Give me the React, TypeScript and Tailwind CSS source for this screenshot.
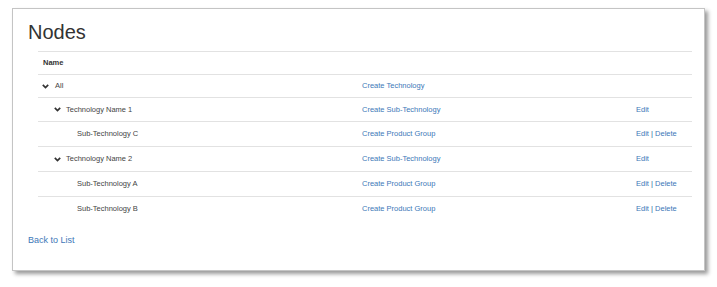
import React from "react";

const Chevron = () => (
  <svg width="7" height="5" viewBox="0 0 7 5" className="shrink-0">
    <polyline points="0.8,0.9 3.5,3.6 6.2,0.9" fill="none" stroke="#333" strokeWidth="1.7" />
  </svg>
);

type Row = {
  level: 0 | 1 | 2;
  name: string;
  chevron: boolean;
  create: string;
  edit: boolean;
  del: boolean;
  h: string;
};

const rows: Row[] = [
  { level: 0, name: "All", chevron: true, create: "Create Technology", edit: false, del: false, h: "h-[23px]" },
  { level: 1, name: "Technology Name 1", chevron: true, create: "Create Sub-Technology", edit: true, del: false, h: "h-[24px]" },
  { level: 2, name: "Sub-Technology C", chevron: false, create: "Create Product Group", edit: true, del: true, h: "h-[25px]" },
  { level: 1, name: "Technology Name 2", chevron: true, create: "Create Sub-Technology", edit: true, del: false, h: "h-[25px]" },
  { level: 2, name: "Sub-Technology A", chevron: false, create: "Create Product Group", edit: true, del: true, h: "h-[25px]" },
  { level: 2, name: "Sub-Technology B", chevron: false, create: "Create Product Group", edit: true, del: true, h: "h-[25px]" },
];

export default function App() {
  return (
    <div className="w-[717px] h-[287px] bg-white pt-[8px] pl-[12px]" style={{ fontFamily: "'Liberation Sans', Arial, sans-serif" }}>
      <div className="w-[693px] h-[263px] bg-white border border-[#c4c4c4] shadow-[3px_3px_4px_rgba(0,0,0,0.4)] pt-[11px] pl-[15px] pr-[12px]">
        <h1 className="text-[20px] leading-[24px] text-[#333] font-normal">Nodes</h1>
        <div className="mt-[7px] ml-[10px] text-[7.5px] text-[#444]">
          <div className="flex items-center h-[23px] border-t border-[#e2e2e2] pl-[5px] font-bold text-[#333]">Name</div>
          {rows.map((r, i) => (
            <div key={i} className={`flex items-center ${r.h} border-t border-[#e2e2e2]`}>
              <div className="w-[324px] flex items-center">
                {r.level === 0 && (
                  <div className="flex items-center pl-[4px] gap-[6px]">
                    <Chevron />
                    <span>{r.name}</span>
                  </div>
                )}
                {r.level === 1 && (
                  <div className="flex items-center pl-[16px] gap-[5px]">
                    <Chevron />
                    <span>{r.name}</span>
                  </div>
                )}
                {r.level === 2 && <span className="pl-[39px]">{r.name}</span>}
              </div>
              <div className="w-[274px] text-[#3d78b8]">{r.create}</div>
              <div className="flex-1 text-[#3d78b8]">
                {r.edit && <span>Edit</span>}
                {r.del && (
                  <>
                    <span className="text-[#2a5d9a]"> | </span>
                    <span>Delete</span>
                  </>
                )}
              </div>
            </div>
          ))}
        </div>
        <div className="mt-[13px] text-[9px] text-[#3d78b8]">Back to List</div>
      </div>
    </div>
  );
}
